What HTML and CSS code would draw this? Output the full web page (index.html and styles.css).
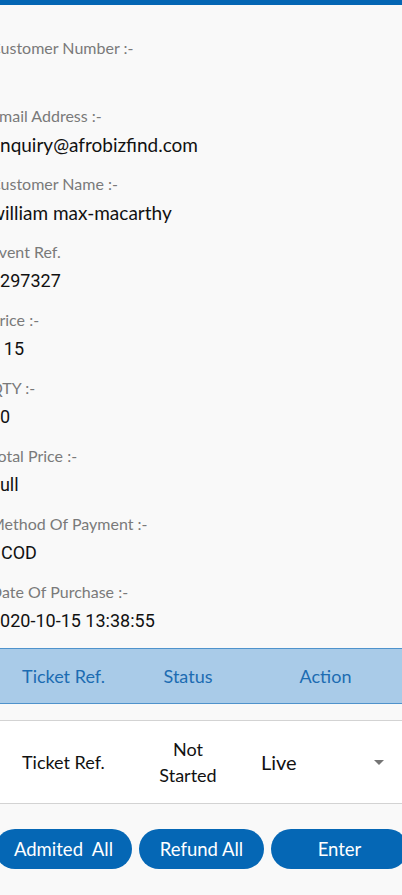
FILE: index.html
```html
<!DOCTYPE html>
<html>
<head>
<meta charset="utf-8">
<link rel="stylesheet" href="styles.css">
</head>
<body>
<div class="topbar"></div>
<div class="page">
  <div class="field"><div class="label">Customer Number :-</div><div class="value"></div></div>
  <div class="field"><div class="label">Email Address :-</div><div class="value alt">enquiry@afrobizfind.com</div></div>
  <div class="field"><div class="label">Customer Name :-</div><div class="value alt">william max-macarthy</div></div>
  <div class="field"><div class="label">Event Ref.</div><div class="value">1297327</div></div>
  <div class="field"><div class="label">Price :-</div><div class="value">₹ 15</div></div>
  <div class="field"><div class="label">QTY :-</div><div class="value">10</div></div>
  <div class="field"><div class="label">Total Price :-</div><div class="value">null</div></div>
  <div class="field"><div class="label">Method Of Payment :-</div><div class="value indent">COD</div></div>
  <div class="field last"><div class="label">Date Of Purchase :-</div><div class="value">2020-10-15 13:38:55</div></div>

  <div class="thead">
    <div class="c1">Ticket Ref.</div>
    <div class="c2">Status</div>
    <div class="c3 center">Action</div>
  </div>

  <div class="trow">
    <div class="c1">Ticket Ref.</div>
    <div class="c2">Not<br>Started</div>
    <div class="c3 select"><span>Live</span><svg class="caret" width="10" height="5" viewBox="0 0 10 5"><path d="M0 0H10L5 5Z" fill="#757575"/></svg></div>
  </div>

  <div class="actions">
    <button class="btn b1">Admited&nbsp; All</button>
    <button class="btn b2">Refund All</button>
    <button class="btn b3">Enter</button>
  </div>
</div>
</body>
</html>
```

FILE: styles.css
```css
html, body {
  margin: 0;
  padding: 0;
  background: #f9f9f9;
  overflow: hidden;
}
body {
  width: 402px;
  height: 895px;
  font-family: Lato, "Noto Sans", sans-serif;
}
.topbar {
  height: 5px;
  background: #0466b4;
}
.page {
  margin-left: -10px;
  width: 422px;
  padding-top: 33px;
}
.field {
  display: flex;
  flex-direction: column;
  gap: 5px;
  margin-bottom: 15px;
}
.field.last {
  margin-bottom: 13px;
}
.label {
  font-size: 16px;
  line-height: 20px;
  color: #7a7a7a;
}
.value {
  font-family: Roboto, "Liberation Sans", sans-serif;
  font-size: 18px;
  line-height: 28px;
  min-height: 28px;
  color: #111;
}
.value.alt {
  font-family: Lato, "Noto Sans", sans-serif;
  font-size: 19px;
}
.value.indent {
  padding-left: 11px;
}
.thead, .trow {
  display: grid;
  grid-template-columns: 147px 102px 173px;
  align-items: center;
}
.thead {
  height: 54px;
  background: #a9cbe8;
  border-top: 1px solid #4f93cc;
  border-bottom: 1px solid #4f93cc;
  color: #1c6cb2;
  font-size: 18px;
  margin-bottom: 16px;
}
.thead > div {
  text-align: center;
}
.trow {
  height: 82px;
  background: #fff;
  border-top: 1px solid #d3d3d3;
  border-bottom: 1px solid #d3d3d3;
  font-size: 18px;
  color: #111;
}
.trow .c1 {
  padding-left: 32px;
}
.trow .c2 {
  text-align: center;
  line-height: 26px;
}
.select {
  display: flex;
  align-items: center;
  justify-content: space-between;
  padding-left: 22px;
  padding-right: 28px;
  font-size: 20px;
}
.actions {
  display: flex;
  gap: 7px;
  margin-top: 25px;
  padding-left: 5px;
}
.btn {
  height: 40px;
  border: none;
  border-radius: 20px;
  background: #0567b5;
  color: #fff;
  font-family: Lato, "Noto Sans", sans-serif;
  font-size: 18.5px;
  padding: 0;
}
.b1 { width: 137px; }
.b2 { width: 125px; }
.b3 { width: 137px; }
```
